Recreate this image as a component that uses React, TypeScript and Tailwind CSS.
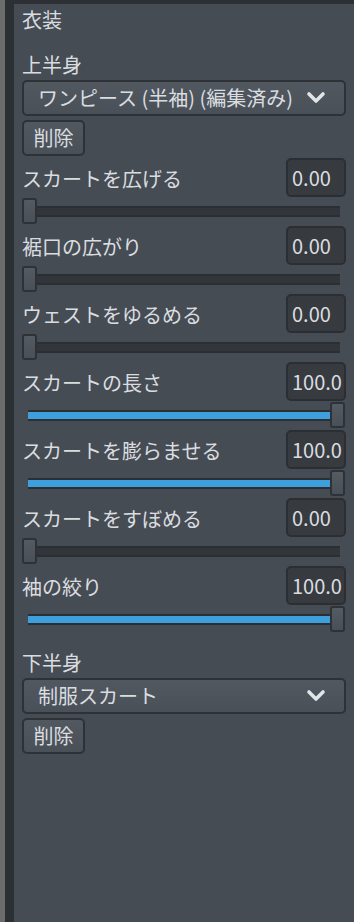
import React from "react";

const font = { fontFamily: '"Noto Sans CJK JP", "Noto Sans", sans-serif' };

type Param = { label: string; value: number };

const params: Param[] = [
  { label: "スカートを広げる", value: 0 },
  { label: "裾口の広がり", value: 0 },
  { label: "ウェストをゆるめる", value: 0 },
  { label: "スカートの長さ", value: 100 },
  { label: "スカートを膨らませる", value: 100 },
  { label: "スカートをすぼめる", value: 0 },
  { label: "袖の絞り", value: 100 },
];

const Chevron = () => (
  <svg width="20" height="14" viewBox="0 0 20 14" className="shrink-0">
    <polyline
      points="3,3 10,10 17,3"
      fill="none"
      stroke="#e2e5e8"
      strokeWidth="3.6"
      strokeLinecap="round"
      strokeLinejoin="round"
    />
  </svg>
);

const Dropdown = ({ text }: { text: string }) => (
  <div className="flex items-center justify-between h-[36px] rounded-[5px] border-2 border-[#2e3236] bg-gradient-to-b from-[#525860] to-[#4a5057] pl-[14px] pr-[18px] text-[#dadde0]">
    <span className="text-[20px] whitespace-nowrap">{text}</span>
    <Chevron />
  </div>
);

const DeleteButton = () => (
  <button className="mt-[4px] h-[36px] w-[63px] rounded-[5px] border-2 border-[#2e3236] bg-gradient-to-b from-[#525860] to-[#4a5057] text-[20px] text-[#dadde0] leading-none">
    削除
  </button>
);

const Slider = ({ value }: { value: number }) => {
  const pct = value / 100;
  return (
    <div className="relative h-[26px] mt-[1px] mb-[2px] mr-[1px]">
      <div className="absolute left-[6px] right-[5px] top-[8px] h-[11px] bg-[#32363b] border-y-2 border-[#2b2f33] overflow-hidden">
        <div className="h-full bg-[#3d9fdb]" style={{ width: `${pct * 100}%` }} />
      </div>
      <div
        className="absolute top-0 h-[26px] w-[15px] rounded-[3px] border-2 border-[#2e3236] bg-gradient-to-b from-[#555b63] to-[#4a5057]"
        style={{ left: `calc((100% - 15px) * ${pct})` }}
      />
    </div>
  );
};

const Row = ({ label, value }: Param) => (
  <div>
    <div className="flex items-center justify-between h-[39px]">
      <span className="text-[20px] text-[#dadde0] whitespace-nowrap pt-[3px]">{label}</span>
      <div className="h-[39px] w-[60px] rounded-[5px] border-2 border-[#2b2f33] bg-[#373b40] flex items-center pl-[4px] text-[20px] text-[#dadde0]">
        {value === 0 ? "0.00" : value.toFixed(1)}
      </div>
    </div>
    <Slider value={value} />
  </div>
);

export default function App() {
  return (
    <div className="flex w-[354px] h-[922px] bg-[#2c3035]" style={font}>
      <div className="w-[5px] bg-[#6c6c6c]" />
      <div className="flex flex-col flex-1">
        <div className="h-[4px] bg-[#2c3035]" />
        <div className="flex flex-1">
          <div className="w-[9px] bg-[#2b3034]" />
          <div className="flex-1 bg-[#464c53] pl-[8px] pr-[8px]">
            <div className="h-[32px] flex items-center text-[20px] text-[#dadde0]">衣装</div>
            <div className="mt-[14px] h-[30px] flex items-center text-[20px] text-[#dadde0]">上半身</div>
            <Dropdown text="ワンピース (半袖) (編集済み)" />
            <DeleteButton />
            <div className="mt-[2px]">
              {params.map((p) => (
                <Row key={p.label} {...p} />
              ))}
            </div>
            <div className="mt-[16px] h-[30px] flex items-center text-[20px] text-[#dadde0]">下半身</div>
            <Dropdown text="制服スカート" />
            <DeleteButton />
          </div>
        </div>
      </div>
    </div>
  );
}
